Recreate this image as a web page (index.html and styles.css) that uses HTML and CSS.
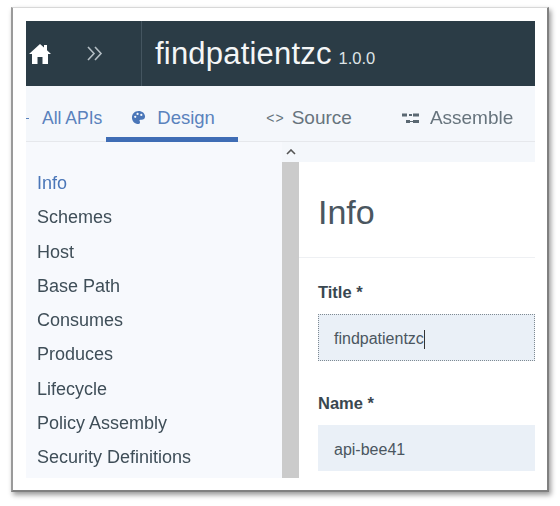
FILE: index.html
```html
<!DOCTYPE html>
<html lang="en">
  <head>
    <meta charset="UTF-8" />
    <title>findpatientzc</title>
    <link rel="stylesheet" href="styles.css">
  </head>
  <body>
    <div class="card">
      <div class="app">
        <!-- top bar -->
        <div class="topbar">
          <div class="crumbs">
            <svg class="home" viewBox="0 0 22 20" width="22" height="20">
              <path d="M11 0 L15 3.6 L15 1 L18 1 L18 6.3 L22 10 L19 10 L19 20 L13.5 20 L13.5 13 L8.5 13 L8.5 20 L3 20 L3 10 L0 10 Z" fill="#fff" />
            </svg>
            <svg class="chev" viewBox="0 0 16 15" width="16" height="15">
              <path d="M1 1 L7 7.5 L1 14 M8 1 L14 7.5 L8 14" fill="none" stroke="#b4bec4" stroke-width="1.6" />
            </svg>
          </div>
          <div class="api-title">findpatientzc <span class="version">1.0.0</span></div>
        </div>
        <!-- tabs -->
        <div class="tabs">
          <span class="dash"></span>
          <a class="tab link allapis">All APIs</a>
          <a class="tab link active">
            <svg viewBox="0 0 16 16" width="15" height="15">
              <path fill="#4a76b8" fill-rule="evenodd" d="M8 1 C12 1 15 3.6 15 7 C15 9.4 13.2 10.4 11.4 10.4 L10 10.4 C9 10.4 8.8 11.4 9.3 12 C10 13 9.6 15 8 15 C4 15 1 12 1 8 C1 4 4 1 8 1 Z M4.5 6 A1.2 1.2 0 1 0 4.5 8.4 A1.2 1.2 0 1 0 4.5 6 Z M7 3 A1.2 1.2 0 1 0 7 5.4 A1.2 1.2 0 1 0 7 3 Z M11 4 A1.2 1.2 0 1 0 11 6.4 A1.2 1.2 0 1 0 11 4 Z" />
            </svg>
            Design
          </a>
          <a class="tab source"><span class="code">&lt;&gt;</span> Source</a>
          <a class="tab assemble">
            <svg viewBox="0 0 17 13" width="17" height="13">
              <path fill="#5a6872" d="M0 1.5 H5 V4.5 H0 Z M7 2 H10 V4 H7 Z M11 1.5 H17 V4.5 H11 Z M4 8 H8 V11 H4 Z M8 9 H11 V10 H8 Z M11 8 H17 V11 H11 Z" />
            </svg>
            Assemble
          </a>
        </div>
        <div class="content">
          <!-- left nav -->
          <ul class="sidenav">
            <li class="current">Info</li>
            <li>Schemes</li>
            <li>Host</li>
            <li>Base Path</li>
            <li>Consumes</li>
            <li>Produces</li>
            <li>Lifecycle</li>
            <li>Policy Assembly</li>
            <li>Security Definitions</li>
          </ul>
          <div class="scrollbar">
            <div class="scroll-up">
              <svg viewBox="0 0 10 6" width="10" height="6">
                <path d="M1 5 L5 1 L9 5" fill="none" stroke="#555" stroke-width="1.6" />
              </svg>
            </div>
            <div class="scroll-thumb"></div>
          </div>
          <!-- form -->
          <div class="main">
            <h1 class="page-title">Info</h1>
            <div class="form">
              <label class="field-label">Title *</label>
              <div class="field focused">findpatientzc<span class="caret"></span></div>
              <label class="field-label second">Name *</label>
              <div class="field">api-bee41</div>
            </div>
          </div>
        </div>
      </div>
    </div>
  </body>
</html>
```

FILE: styles.css
```css
* {
  margin: 0;
  padding: 0;
  box-sizing: border-box;
}
body {
  background-color: #fff;
  font-family: "Liberation Sans", Arial, sans-serif;
  width: 560px;
  height: 506px;
  overflow: hidden;
  padding: 7px 0 0 11px;
}
/* outer picture frame */
.card {
  width: 538px;
  height: 485px;
  background-color: #fff;
  border: 1px solid #d8d8d8;
  border-left: 2px solid #9a9a9a;
  border-right: 2px solid #808080;
  border-bottom: 2px solid #808080;
  box-shadow: 2px 3px 5px rgba(0, 0, 0, 0.4);
  padding: 13px 0 0 13px;
}
.app {
  width: 509px;
  height: 457px;
  display: flex;
  flex-direction: column;
  filter: blur(0.5px);
}
/* top bar */
.topbar {
  height: 65px;
  background-color: #2b3c46;
  display: flex;
  align-items: center;
  color: #fff;
}
.crumbs {
  width: 116px;
  height: 100%;
  border-right: 1px solid #445560;
  display: flex;
  align-items: center;
  padding-left: 3px;
  gap: 36px;
}
.api-title {
  font-size: 31px;
  padding-left: 13px;
  color: #f4f6f7;
  letter-spacing: 0.2px;
}
.version {
  font-size: 16.5px;
  color: #dfe4e7;
  letter-spacing: 0;
  margin-left: -2px;
}
/* tabs */
.tabs {
  height: 56px;
  background-color: #f4f7fb;
  border-bottom: 1px solid #e6e8ec;
  display: flex;
  align-items: stretch;
  font-size: 19px;
  color: #67747d;
}
.dash {
  width: 3px;
  height: 1px;
  background-color: #5a82bd;
  margin-top: 32px;
  flex: none;
}
.tab {
  display: flex;
  align-items: center;
  gap: 11px;
  padding-top: 9px;
}
.link {
  color: #5a82bd;
}
.allapis {
  margin-left: 13px;
  font-size: 17.5px;
}
.active {
  width: 132px;
  padding-left: 25px;
  padding-top: 12px;
  margin-left: 4px;
  border-bottom: 5px solid #3f6db5;
  margin-bottom: -1px;
  font-size: 18.5px;
}
.source {
  margin-left: 28px;
}
.code {
  font-size: 14px;
  letter-spacing: 1px;
  margin-right: -4px;
}
.assemble {
  margin-left: 50px;
}
/* lower part */
.content {
  flex: 1;
  display: flex;
  min-height: 0;
}
.sidenav {
  width: 256px;
  background-color: #f7f9fd;
  list-style: none;
  padding-top: 24px;
  font-size: 18px;
  color: #3f4e58;
}
.sidenav li {
  height: 34.25px;
  line-height: 34px;
  padding-left: 11px;
}
.sidenav .current {
  color: #4a76b8;
}
.scrollbar {
  width: 17px;
  background-color: #f4f7fb;
  display: flex;
  flex-direction: column;
}
.scroll-up {
  height: 20px;
  display: flex;
  justify-content: center;
  align-items: center;
}
.scroll-thumb {
  flex: 1;
  background-color: #cbcbcb;
}
.main {
  flex: 1;
  background-color: #fff;
}
.page-title {
  font-size: 34px;
  font-weight: normal;
  color: #4a5660;
  height: 116px;
  padding: 29px 0 0 19px;
  border-top: 20px solid #f4f7fb;
  border-bottom: 1px solid #eef0f3;
  line-height: 42px;
}
.form {
  padding-left: 19px;
}
.field-label {
  display: block;
  font-size: 16.5px;
  font-weight: bold;
  color: #3a4750;
  margin-top: 24px;
  height: 20px;
  line-height: 20px;
}
.second {
  margin-top: 32px;
}
.field {
  height: 46px;
  margin-top: 12px;
  background-color: #eaf0f7;
  font-size: 16px;
  color: #4a5660;
  padding: 3px 0 0 16px;
  display: flex;
  align-items: center;
}
.focused {
  height: 47px;
  outline: 1px dotted #7f8a92;
  outline-offset: -1px;
}
.caret {
  display: inline-block;
  width: 1px;
  height: 19px;
  background-color: #333;
}
```
